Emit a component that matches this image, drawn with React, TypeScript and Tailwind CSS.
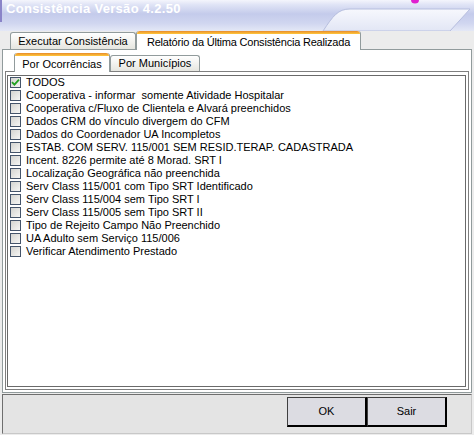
import React from "react";

const items = [
  "TODOS",
  "Cooperativa - informar  somente Atividade Hospitalar",
  "Cooperativa c/Fluxo de Clientela e Alvará preenchidos",
  "Dados CRM do vínculo divergem do CFM",
  "Dados do Coordenador UA Incompletos",
  "ESTAB. COM SERV. 115/001 SEM RESID.TERAP. CADASTRADA",
  "Incent. 8226 permite até 8 Morad. SRT I",
  "Localização Geográfica não preenchida",
  "Serv Class 115/001 com Tipo SRT Identificado",
  "Serv Class 115/004 sem Tipo SRT I",
  "Serv Class 115/005 sem Tipo SRT II",
  "Tipo de Rejeito Campo Não Preenchido",
  "UA Adulto sem Serviço 115/006",
  "Verificar Atendimento Prestado",
];

function TitleBar() {
  return (
    <div className="relative h-[31px] w-full overflow-hidden">
      <svg className="absolute inset-0" width="474" height="31" viewBox="0 0 474 31">
        <defs>
          <linearGradient id="tb" x1="0" y1="0" x2="0" y2="1">
            <stop offset="0" stopColor="#f4f5fc" />
            <stop offset="0.15" stopColor="#e0e4f6" />
            <stop offset="0.45" stopColor="#c4cbeb" />
            <stop offset="0.75" stopColor="#d0d6f0" />
            <stop offset="1" stopColor="#e4e8f6" />
          </linearGradient>
          <linearGradient id="cv" x1="0" y1="0" x2="0" y2="1">
            <stop offset="0" stopColor="#f7f8fd" />
            <stop offset="1" stopColor="#e2e6f5" />
          </linearGradient>
        </defs>
        <rect x="0" y="0" width="474" height="31" fill="url(#tb)" />
        <path d="M323 31 C333 16 338 9 350 9 L470 9 L450 31 Z" fill="url(#cv)" stroke="#b6bede" strokeWidth="1" />
        <rect x="0" y="0" width="2" height="22" fill="#8a84c8" />
        <ellipse cx="415" cy="0" rx="4" ry="3.5" fill="#e020d0" />
      </svg>
      <span className="absolute left-[6px] top-[1px] text-[13px] font-bold tracking-[0.3px] text-white leading-[15px]">
        Consistência Versão 4.2.50
      </span>
    </div>
  );
}

function Checkbox({ checked }: { checked?: boolean }) {
  return (
    <div className="w-[11px] h-[11px] border border-[#44546a] bg-gradient-to-br from-[#d4d4d0] to-[#f6f6f4] flex items-center justify-center shrink-0">
      {checked && (
        <svg width="9" height="9" viewBox="0 0 9 9">
          <path d="M1 4.2 L3.4 6.6 L8 1.6" fill="none" stroke="#21a121" strokeWidth="1.8" />
        </svg>
      )}
    </div>
  );
}

export default function App() {
  return (
    <div
      className="w-[474px] h-[435px] bg-[#ececec] flex flex-col overflow-hidden text-black"
      style={{ fontFamily: '"Liberation Sans", Arial, sans-serif' }}
    >
      <TitleBar />
      {/* outer tabs */}
      <div className="h-[18px] flex items-end pl-[10px] relative z-10">
        <div className="h-[17px] w-[126px] border border-b-0 border-[#919b9c] rounded-t-[3px] bg-gradient-to-b from-white to-[#e6e6e0] flex items-center justify-center text-[11px] leading-none">
          Executar Consistência
        </div>
        <div className="h-[19px] w-[225px] -mb-px border-x border-[#919b9c] rounded-t-[3px] bg-white flex flex-col">
          <div className="h-[3px] rounded-t-[3px] bg-gradient-to-b from-[#e68b2c] to-[#ffc83c]" />
          <div className="flex-1 flex items-center justify-center text-[11px] leading-none tracking-[-0.2px]">
            Relatório da Última Consistência Realizada
          </div>
        </div>
      </div>
      {/* outer panel */}
      <div className="mx-[2px] h-[344px] border border-[#919b9c] bg-white px-[2px] pb-[2px] flex flex-col">
        <div className="h-[21px] flex items-end pl-[9px] relative z-10">
          <div className="h-[19px] w-[96px] -mb-px border-x border-[#919b9c] rounded-t-[3px] bg-white flex flex-col">
            <div className="h-[3px] rounded-t-[3px] bg-gradient-to-b from-[#e68b2c] to-[#ffc83c]" />
            <div className="flex-1 flex items-center justify-center text-[11px] leading-none">
              Por Ocorrências
            </div>
          </div>
          <div className="h-[16px] w-[90px] border border-b-0 border-[#919b9c] rounded-t-[3px] bg-gradient-to-b from-white to-[#e6e6e0] flex items-center justify-center text-[11px] leading-none">
            Por Municípios
          </div>
        </div>
        <div className="h-[319px] border border-[#7f7f7f] bg-white pl-px pr-[2px] pt-[3px] pb-[2px]">
          <div className="h-[312px] border border-[#6a6a6a] bg-white pl-[2px] flex flex-col">
            {items.map((t, i) => (
              <div key={i} className="h-[13px] flex items-center gap-[5px] text-[11px] leading-none whitespace-pre">
                <Checkbox checked={i === 0} />
                <span>{t}</span>
              </div>
            ))}
          </div>
        </div>
      </div>
      {/* bottom panel */}
      <div className="mt-px mx-[2px] h-[40px] border border-l-[#6e6e6e] border-t-[#6e6e6e] border-r-[#c8c8c8] border-b-[#c8c8c8] bg-[#e4e4e4] flex justify-end pr-[24px] pt-[2px]">
        <div className="flex h-[30px]">
          <button className="w-[80px] h-[30px] border border-[#404040] border-r-2 border-b-2 border-r-black border-b-black bg-[#dcdce2] text-[11px] leading-none">
            OK
          </button>
          <button className="w-[80px] h-[30px] border border-[#404040] border-r-2 border-b-2 border-r-black border-b-black bg-[#dcdce2] text-[11px] leading-none">
            Sair
          </button>
        </div>
      </div>
    </div>
  );
}
